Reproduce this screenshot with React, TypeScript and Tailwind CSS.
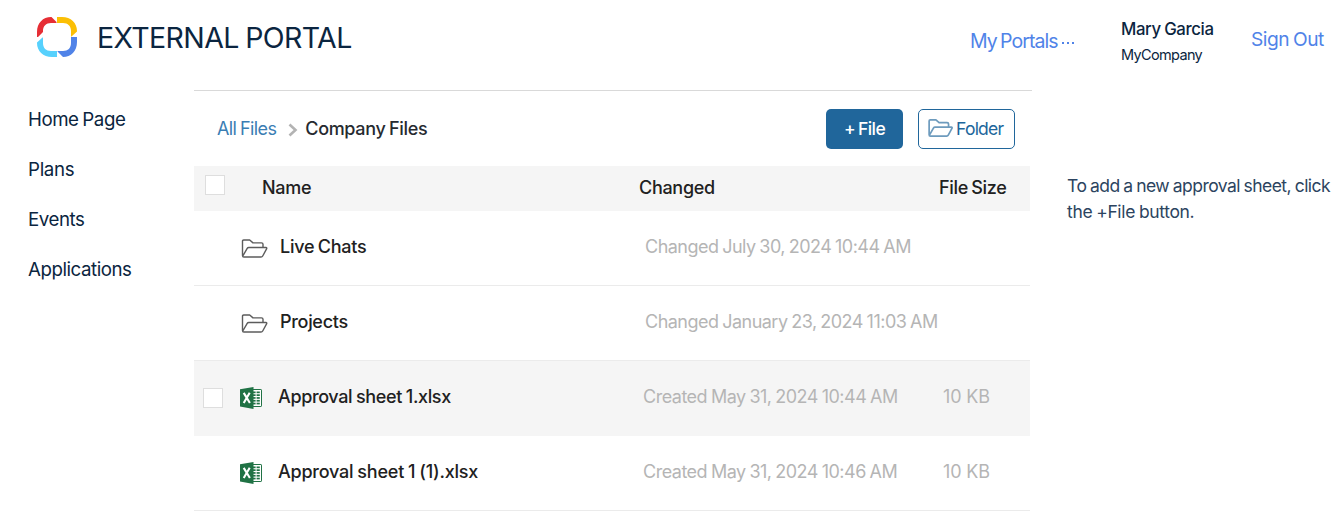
import type { ReactNode } from "react";

function Logo() {
  return (
    <svg width="42" height="42" viewBox="0 0 42 42" className="block shrink-0">
      <path d="M1 21V16C1 7 7 1 15 1H15.500L20.500 6V7H15C10 7 7 10 7 15V16L2 21Z" fill="#e62e35" />
      <path d="M21 1H26C35 1 41 7 41 15V15.500L35.500 20.500H35V15C35 10 32 7 27 7H21Z" fill="#fbbf05" />
      <path d="M41 21V26C41 35 35 41 27 41L21.500 35.500V35H27C32 35 35 32 35 27V21Z" fill="#5083e8" />
      <path d="M21 41H16C7 41 1 35 1 27V26.500L6.500 21.500H7V27C7 32 10 35 15 35H21Z" fill="#57d1fd" />
    </svg>
  );
}

function FolderIcon({ className }: { className: string }) {
  return (
    <svg viewBox="0 0 26 19" fill="none" stroke="currentColor" strokeLinejoin="round" className={className}>
      <path d="M1 16.500V2.200Q1 1 2.200 1H8.200L11.500 3.900H20Q21.500 3.900 21.500 5.300V8.500M1 16.500Q1 18 2.400 18H19.500Q20.700 18 21.200 17L25.200 9.700Q25.500 8.500 24.500 8.500H7.300Q6.200 8.500 5.700 9.400L1.300 17" />
    </svg>
  );
}

function ExcelIcon() {
  return (
    <svg width="22" height="22" viewBox="0 0 22 22" className="block shrink-0">
      <rect x="12" y="2.500" width="9.500" height="17" rx="0.600" fill="#fff" stroke="#207245" />
      <g fill="#207245">
        <rect x="13" y="4.500" width="2.600" height="1.700" />
        <rect x="16.600" y="4.500" width="3.200" height="1.700" />
        <rect x="13" y="7.300" width="2.600" height="1.700" />
        <rect x="16.600" y="7.300" width="3.200" height="1.700" />
        <rect x="13" y="10.100" width="2.600" height="1.700" />
        <rect x="16.600" y="10.100" width="3.200" height="1.700" />
        <rect x="13" y="12.900" width="2.600" height="1.700" />
        <rect x="16.600" y="12.900" width="3.200" height="1.700" />
        <rect x="13" y="15.700" width="2.600" height="1.700" />
        <rect x="16.600" y="15.700" width="3.200" height="1.700" />
        <path d="M0 2.300L13.500 0V22L0 19.500Z" />
      </g>
      <path d="M3.700 5.900L9.900 16M9.700 5.700L3.700 16" stroke="#fff" strokeWidth="2.100" />
    </svg>
  );
}

function Checkbox() {
  return <span className="block size-5 shrink-0 border border-[#dedede] bg-white" />;
}

function Row({ icon, name, nameClass, changed, changedClass, size, active }: {
  icon: ReactNode; name: string; nameClass: string; changed: string; changedClass: string; size?: string; active?: boolean;
}) {
  return (
    <div className={`flex h-[75px] items-center border-b ${active ? "border-[#f5f5f5] bg-[#f5f5f5]" : "border-[#ebebeb]"}`}>
      <div className="w-[46px] shrink-0 pl-[9px]">{active && <Checkbox />}</div>
      {icon}
      <div className={`grow pb-[2px] text-[18px] font-medium text-[#212121] ${nameClass}`}>{name}</div>
      <div className={`shrink-0 pb-[2px] text-[18px] text-[#b5b5b5] ${changedClass}`}>{changed}</div>
      <div className="w-[87px] shrink-0 pb-[2px] text-[18px] text-[#b5b5b5] [word-spacing:-0.5px]">{size}</div>
    </div>
  );
}

export default function App() {
  const folder = <FolderIcon className="ml-[1px] h-[19px] w-[27px] shrink-0 stroke-[1.4] text-[#5c5c5c]" />;
  return (
    <div className="flex h-[526px] w-[1343px] flex-col overflow-hidden whitespace-nowrap bg-white font-['Inter',sans-serif] leading-[24px]">
      <header className="flex h-[90px] shrink-0">
        <div className="flex grow items-start pl-9 pt-4">
          <Logo />
          <h1 className="ml-[19px] pt-[6px] text-[28.5px] leading-[32px] tracking-[-0.6px] text-[#0b2540] [word-spacing:-1px]">EXTERNAL PORTAL</h1>
        </div>
        <a className="flex w-[151px] items-center self-start pt-[29px] text-[19.5px] tracking-[-0.95px] text-[#5083e8] [word-spacing:-1.2px]">
          <span className="pl-px">My Portals</span>
          <span className="ml-[4px] mt-[3px] flex gap-[3px]">
            <i className="size-[2px] bg-[#5083e8]" />
            <i className="size-[2px] bg-[#5083e8]" />
            <i className="size-[2px] bg-[#5083e8]" />
          </span>
        </a>
        <div className="w-[131px] pl-px pt-[17px] text-[#0b2540]">
          <div className="text-[16.8px] font-medium tracking-[-0.4px] [word-spacing:-0.5px]">Mary Garcia</div>
          <div className="mt-[2px] text-[14.5px] tracking-[-0.65px]">MyCompany</div>
        </div>
        <a className="w-[92px] pt-[27px] text-[19.2px] tracking-[-0.5px] text-[#5083e8] [word-spacing:-1px]">Sign Out</a>
      </header>

      <div className="flex grow">
        <nav className="flex w-[194px] shrink-0 flex-col gap-[26px] pl-[28px] pt-[18px] text-[18.7px] tracking-[-0.45px] text-[#0b2540]">
          <a className="[word-spacing:-1px]">Home Page</a>
          <a className="tracking-[-0.3px]">Plans</a>
          <a>Events</a>
          <a>Applications</a>
        </nav>

        <main className="w-[838px] shrink-0 border-t border-[#d9d9d9] pr-[2px]">
          <div className="flex h-[75px] items-center pl-[23px] pr-[15px]">
            <a className="text-[18px] tracking-[-0.6px] text-[#3a7db3] [word-spacing:-0.8px]">All Files</a>
            <svg width="10" height="14" viewBox="0 0 10 14" fill="none" stroke="#b3b3b3" strokeWidth="2.600" className="ml-[12px] mt-[2px]">
              <path d="M1.500 1.500L7.500 7L1.500 12.500" />
            </svg>
            <span className="ml-[7px] text-[18px] font-medium tracking-[-0.35px] text-[#262a30] [word-spacing:-0.8px]">Company Files</span>
            <div className="grow" />
            <button className="h-10 w-[77px] rounded-[5px] bg-[#20669b] text-[17.5px] font-medium tracking-[-0.6px] text-white [word-spacing:-1px]">+ File</button>
            <button className="ml-[15px] flex h-10 w-[97px] items-center rounded-[5px] border border-[#20669b] bg-white pl-[9px] text-[17.5px] tracking-[-0.75px] text-[#20669b]">
              <FolderIcon className="mb-[2px] mr-[3px] h-[18px] w-[25px] shrink-0 stroke-[1.8] opacity-65" />
              Folder
            </button>
          </div>
          <div className="flex h-[45px] items-center bg-[#f5f5f5] text-[18px] font-medium text-[#212121]">
            <div className="w-[68px] shrink-0 pb-[7px] pl-[11px]"><Checkbox /></div>
            <div className="w-[377px] pb-px tracking-[-0.3px]">Name</div>
            <div className="w-[300px] pb-px tracking-[-0.3px]">Changed</div>
            <div className="pb-px tracking-[-0.35px] [word-spacing:-1px]">File Size</div>
          </div>
          <Row icon={folder} name="Live Chats" nameClass="pl-[12px] tracking-[-0.25px] [word-spacing:-1px]" changed="Changed July 30, 2024 10:44 AM" changedClass="w-[298px] tracking-[-0.52px] [word-spacing:-0.8px]" />
          <Row icon={folder} name="Projects" nameClass="pl-[12px] tracking-[-0.3px]" changed="Changed January 23, 2024 11:03 AM" changedClass="w-[298px] tracking-[-0.52px] [word-spacing:-0.8px]" />
          <Row active icon={<ExcelIcon />} name="Approval sheet 1.xlsx" nameClass="pl-4 tracking-[-0.37px] [word-spacing:-0.6px]" changed="Created May 31, 2024 10:44 AM" changedClass="w-[300px] tracking-[-0.5px] [word-spacing:-0.8px]" size="10 KB" />
          <Row icon={<ExcelIcon />} name="Approval sheet 1 (1).xlsx" nameClass="pl-4 tracking-[-0.22px] [word-spacing:-0.6px]" changed="Created May 31, 2024 10:46 AM" changedClass="w-[300px] tracking-[-0.5px] [word-spacing:-0.8px]" size="10 KB" />
        </main>

        <aside className="pl-[35px] pt-[83px] text-[17.5px] leading-[26px] text-[#2c4460]">
          <div className="tracking-[-0.55px] [word-spacing:-0.7px]">To add a new approval sheet, click</div>
          <div className="tracking-[-0.34px] [word-spacing:-0.7px]">the +File button.</div>
        </aside>
      </div>
    </div>
  );
}
